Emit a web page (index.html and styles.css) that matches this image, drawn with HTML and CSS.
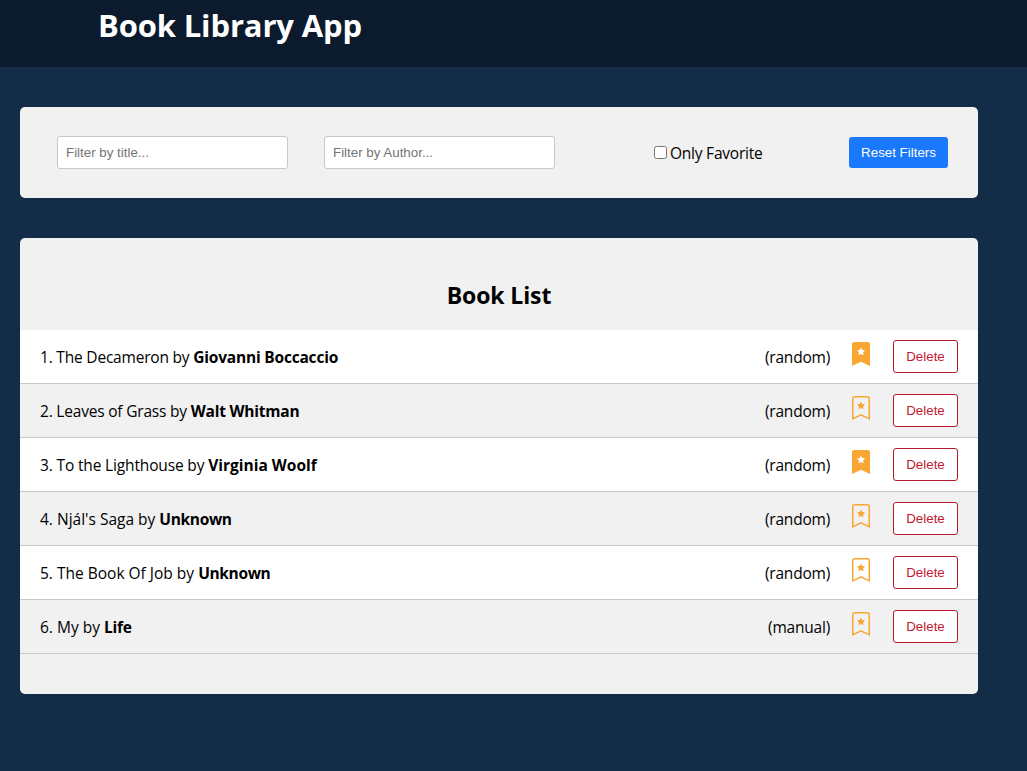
FILE: index.html
```html
<!DOCTYPE html>
<html lang="en">
<head>
<meta charset="utf-8">
<title>Book Library App</title>
<link rel="stylesheet" href="styles.css">
</head>
<body>
<svg class="sprite" aria-hidden="true">
  <symbol id="mark-filled" viewBox="0 0 18 24">
    <path fill="currentColor" fill-rule="evenodd" d="M2.5 0h13A2.5 2.5 0 0 1 18 2.5V24l-9-4.2L0 24V2.5A2.5 2.5 0 0 1 2.5 0ZM9 5.5l-1.25 2.6-2.85.4 2.05 2-.5 2.85L9 12l2.55 1.35-.5-2.85 2.05-2-2.85-.4Z"/>
  </symbol>
  <symbol id="mark-outline" viewBox="0 0 18 24">
    <path fill="none" stroke="currentColor" stroke-width="1.5" d="M2.7.75h12.6a1.95 1.95 0 0 1 1.95 1.95v20.1L9 18.8.75 22.8V2.7A1.95 1.95 0 0 1 2.7.75Z"/>
    <path fill="currentColor" d="m9 5.5-1.25 2.6-2.85.4 2.05 2-.5 2.85L9 12l2.55 1.35-.5-2.85 2.05-2-2.85-.4Z"/>
  </symbol>
</svg>
<header class="app-header"><h1 class="app-title">Book Library App</h1></header>
<main class="app-main">
  <section class="filter">
    <div class="filter-group"><input class="filter-input" type="text" placeholder="Filter by title..."></div>
    <div class="filter-group"><input class="filter-input" type="text" placeholder="Filter by Author..."></div>
    <label class="filter-favorite"><input class="filter-check" type="checkbox"><span class="filter-label">Only Favorite</span></label>
    <button class="reset" type="button">Reset Filters</button>
  </section>
  <section class="books">
    <h2 class="books-title">Book List</h2>
    <ul class="book-list">
      <li class="book"><div class="book-info">1. The Decameron by <strong>Giovanni Boccaccio</strong></div><div class="book-actions"><span class="source">(random)</span><svg class="mark"><use href="#mark-filled"/></svg><button class="delete" type="button">Delete</button></div></li>
      <li class="book"><div class="book-info">2. Leaves of Grass by <strong>Walt Whitman</strong></div><div class="book-actions"><span class="source">(random)</span><svg class="mark"><use href="#mark-outline"/></svg><button class="delete" type="button">Delete</button></div></li>
      <li class="book"><div class="book-info">3. To the Lighthouse by <strong>Virginia Woolf</strong></div><div class="book-actions"><span class="source">(random)</span><svg class="mark"><use href="#mark-filled"/></svg><button class="delete" type="button">Delete</button></div></li>
      <li class="book"><div class="book-info">4. Njál's Saga by <strong>Unknown</strong></div><div class="book-actions"><span class="source">(random)</span><svg class="mark"><use href="#mark-outline"/></svg><button class="delete" type="button">Delete</button></div></li>
      <li class="book"><div class="book-info">5. The Book Of Job by <strong>Unknown</strong></div><div class="book-actions"><span class="source">(random)</span><svg class="mark"><use href="#mark-outline"/></svg><button class="delete" type="button">Delete</button></div></li>
      <li class="book"><div class="book-info">6. My by <strong>Life</strong></div><div class="book-actions"><span class="source">(manual)</span><svg class="mark"><use href="#mark-outline"/></svg><button class="delete" type="button">Delete</button></div></li>
    </ul>
  </section>
</main>
</body>
</html>
```
FILE: styles.css
```css
* { box-sizing: border-box; }
body {
  margin: 0;
  background: #132d48;
  color: #000;
  font-family: "Open Sans", "Noto Sans", sans-serif;
  font-size: 15.5px;
  line-height: 21px;
}
.sprite { display: none; }
.app-header {
  height: 67px;
  padding: 4px 98px 0;
  background: #0b1a2c;
  color: #fff;
}
.app-title { margin: 0; font-size: 31px; line-height: 43px; font-weight: 700; letter-spacing: -0.15px; }
.app-main {
  width: 998px;
  padding: 40px 20px;
  display: flex;
  flex-direction: column;
  gap: 40px;
}
.filter {
  height: 91px;
  padding: 0 30px 0 37px;
  display: flex;
  align-items: center;
  background: #f1f1f1;
  border-radius: 5px;
}
.filter-group { width: 267px; display: flex; }
.filter-input {
  width: 231px;
  height: 33px;
  padding: 8px;
  border: 1px solid #c8c8c8;
  border-radius: 3px;
  background: #fff;
  font: 13.333px "Liberation Sans", Arial, sans-serif;
}
.filter-input::placeholder { color: #757575; }
.filter-favorite { margin-left: 63px; display: flex; align-items: center; gap: 3px; }
.filter-check { width: 13px; height: 13px; margin: 0; }
.filter-label { padding-top: 1px; letter-spacing: -0.23px; }
.reset {
  width: 99px;
  height: 31px;
  margin-left: auto;
  padding: 0;
  border: 0;
  border-radius: 3px;
  background: #1a78fc;
  color: #fff;
  font: 13.333px "Liberation Sans", Arial, sans-serif;
}
.books {
  height: 456px;
  padding-top: 40px;
  background: #f1f1f1;
  border-radius: 5px;
}
.books-title { margin: 0 0 17px; font-size: 23px; line-height: 35px; text-align: center; letter-spacing: -0.1px; }
.book-list { margin: 0; padding: 0; list-style: none; }
.book {
  height: 54px;
  padding: 0 20px;
  display: flex;
  align-items: center;
  justify-content: space-between;
  border-bottom: 1px solid #c8c8c8;
}
.book:nth-child(odd) { background: #fff; }
.book-info { padding-top: 2px; }
.book-info strong { letter-spacing: -0.2px; }
.book:nth-child(1) .book-info,
.book:nth-child(2) .book-info { letter-spacing: -0.2px; }
.book:nth-child(3) .book-info { letter-spacing: -0.15px; }
.book:nth-child(3) strong { letter-spacing: 0; }
.book:nth-child(4) strong,
.book:nth-child(5) strong { letter-spacing: -0.35px; }
.book-actions { display: flex; align-items: center; }
.source { padding-top: 2px; letter-spacing: -0.22px; }
.mark { width: 18px; height: 24px; margin: 0 23px 5px 22px; color: #f9a633; }
.delete {
  width: 65px;
  height: 33px;
  padding: 0;
  border: 1px solid #b71c2d;
  border-radius: 3px;
  background: #fff;
  color: #c01a30;
  font: 13.333px "Liberation Sans", Arial, sans-serif;
}
```
